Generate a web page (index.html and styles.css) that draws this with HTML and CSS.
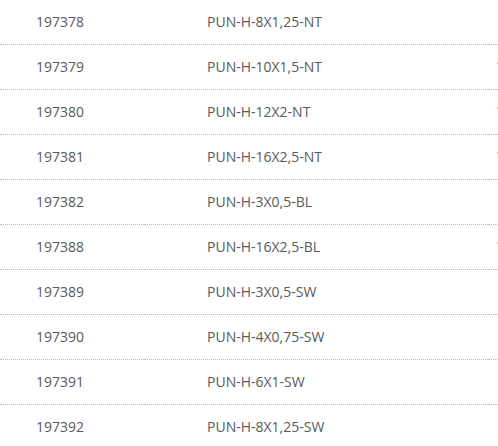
FILE: index.html
```html
<!DOCTYPE html>
<html>
<head>
<meta charset="utf-8">
<link rel="stylesheet" href="styles.css">
</head>
<body>
<div class="list">
  <div class="row"><div class="c1">197378</div><div class="c2">PUN-H-8X1,25-NT</div><div class="c3"></div></div>
  <div class="row"><div class="c1">197379</div><div class="c2">PUN-H-10X1,5-NT</div><div class="c3"><span class="mark"></span></div></div>
  <div class="row"><div class="c1">197380</div><div class="c2">PUN-H-12X2-NT</div><div class="c3"><span class="mark"></span></div></div>
  <div class="row"><div class="c1">197381</div><div class="c2">PUN-H-16X2,5-NT</div><div class="c3"><span class="mark"></span></div></div>
  <div class="row"><div class="c1">197382</div><div class="c2">PUN-H-3X0,5-BL</div><div class="c3"></div></div>
  <div class="row"><div class="c1">197388</div><div class="c2">PUN-H-16X2,5-BL</div><div class="c3"><span class="mark"></span></div></div>
  <div class="row"><div class="c1">197389</div><div class="c2">PUN-H-3X0,5-SW</div><div class="c3"></div></div>
  <div class="row"><div class="c1">197390</div><div class="c2">PUN-H-4X0,75-SW</div><div class="c3"></div></div>
  <div class="row"><div class="c1">197391</div><div class="c2">PUN-H-6X1-SW</div><div class="c3"></div></div>
  <div class="row"><div class="c1">197392</div><div class="c2">PUN-H-8X1,25-SW</div><div class="c3"></div></div>
</div>
</body>
</html>
```
FILE: styles.css
```css
html, body { margin: 0; padding: 0; background: #fff; }
body { width: 498px; height: 446px; overflow: hidden; }
.list { font-family: "Open Sans", "Noto Sans", sans-serif; font-size: 14px; color: #5a5a5a; }
.row { display: flex; height: 45px; }
.row > div { border-bottom: 1px dotted #b8b8b8; display: flex; align-items: center; padding-bottom: 1px; }
.c1 { width: 108px; padding-left: 36px; flex: none; }
.c2 { width: 281px; padding-left: 63px; flex: none; }
.c3 { width: 10px; flex: none; position: relative; }
.mark { position: absolute; left: 9px; top: 17px; width: 1px; height: 2px; background: #f0c48a; }
```
